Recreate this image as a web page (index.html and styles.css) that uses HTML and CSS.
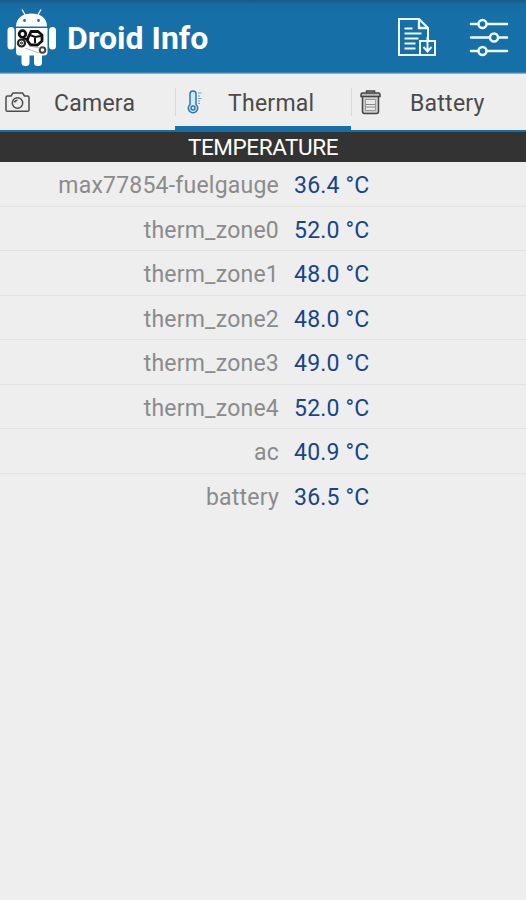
FILE: index.html
```html
<!DOCTYPE html>
<html lang="en">
<head>
<meta charset="utf-8">
<title>Droid Info</title>
<link rel="stylesheet" href="styles.css">
</head>
<body>
<header class="bar">
  <svg class="logo" width="50" height="60" viewBox="0 0 50 60">
    <g fill="#fff">
      <path d="M9 17.500C9 8 17 4.500 24.500 4.500S40 8 40 17.500z"/>
      <path d="M9 19h31.500V43q0 3.500-3.500 3.500H12.500Q9 46.500 9 43z"/>
      <rect x="0.500" y="18" width="7" height="22.500" rx="3.500"/>
      <rect x="42" y="18" width="7" height="22.500" rx="3.500"/>
      <rect x="14.500" y="42" width="8" height="15" rx="3.500"/>
      <rect x="27" y="42" width="8" height="15" rx="3.500"/>
    </g>
    <path d="M15 .5l3.500 6M34 .5L30.500 6.500" stroke="#fff" stroke-width="1.300"/>
    <circle cx="17.500" cy="11.500" r="1.400" fill="#176fa8"/><circle cx="31.500" cy="11.500" r="1.400" fill="#176fa8"/>
    <g fill="none" stroke="#111">
      <circle cx="15.500" cy="25" r="3.300" stroke-width="2.800"/>
      <path d="M24 22.500h7l4 3.500v6l-4.500 4h-7L20 31z" stroke-width="2.800" stroke-linejoin="round"/>
      <path d="M23 26l5 2 6-1M28 28v6M16 29.500l6 1" stroke-width="2"/>
      <circle cx="14.500" cy="34" r="3.500" stroke-width="2.200" stroke="#222"/><circle cx="14.500" cy="34" r="1" stroke-width="1"/>
      <circle cx="35.500" cy="41" r="2.800" stroke="#444" stroke-width="2"/>
      <path d="M18 39l14 5M22 37l11 2" stroke="#aaa" stroke-width=".8"/>
    </g>
  </svg>
  <h1 class="title">Droid Info</h1>
  <svg class="report" width="40" height="42" viewBox="0 0 40 42" fill="none" stroke="#eefaff" stroke-width="2">
    <path d="M22 38H2V2h20l9 9v13"/><path d="M22 2v9h9" stroke-width="2.300"/>
    <path d="M7.500 11.500h8M7.500 16.500h17M7.500 21.500h14M7.500 26.500h11M7.500 31.500h11"/>
    <path d="M27 24h-4v14h15V24H27M30.500 20v14M26.500 30l4 4.500 4-4.500"/>
  </svg>
  <svg class="sliders" width="40" height="40" viewBox="0 0 40 40" fill="none" stroke="#eefaff" stroke-width="2.500" stroke-linecap="round">
    <path d="M2 6h7M18 6h20M2 19.500h18M30 19.500h8M2 33h7M18 33h20"/>
    <circle cx="13.500" cy="6" r="4"/><circle cx="25" cy="19.500" r="4"/><circle cx="13.500" cy="33" r="4"/>
  </svg>
</header>
<nav class="tabs">
  <a class="tab camera">
    <svg class="icon" width="26" height="24" viewBox="0 0 26 24" fill="none" stroke="#4c4c4c" stroke-width="1.500">
      <path d="M1 6.500q0-1.500 1.500-1.500H6l2-3h9.500l2 3h3Q24 5 24 6.500V19q0 1.300-1.300 1.300H2.300Q1 20.300 1 19z"/>
      <circle cx="12.500" cy="12" r="5.200"/><path d="M9.500 11.500q.5-2.200 3-2.200"/>
    </svg><span class="label">Camera</span>
  </a>
  <a class="tab thermal selected">
    <svg class="icon" width="18" height="26" viewBox="0 0 18 26" fill="none" stroke="#2a78ae" stroke-width="1.500">
      <path d="M4 14.500V4a3 3 0 0 1 6 0v10.500a4.700 4.700 0 1 1-6 0z" fill="#d9e7f1"/>
      <circle cx="7" cy="18" r="2"/>
      <path d="M12 3h3.500M12 6h2M12 8.500h3.500M12 11h2M12 13.500h2" stroke="#6c9fc2" stroke-width="1"/>
    </svg><span class="label">Thermal</span>
  </a>
  <a class="tab battery">
    <svg class="icon" width="22" height="26" viewBox="0 0 22 26" fill="none" stroke="#444" stroke-width="1.500">
      <path d="M2.500 6v15.500q0 2 2 2h12q2 0 2-2V6" fill="#ccc"/>
      <path d="M6.500 3V1h8v2M1 6.500V4.500Q1 3 2.500 3h16Q20 3 20 4.500v2z" fill="#bbb"/>
      <path d="M5.500 9.500h10v11h-10z" stroke="#999" fill="#e8e8e8" stroke-width="1"/><path d="M6 14.500h9M6 17h9" stroke="#888" stroke-width="1"/>
    </svg><span class="label">Battery</span>
  </a>
</nav>
<main>
  <h2 class="section">TEMPERATURE</h2>
  <dl class="list">
    <div class="row"><dt>max77854-fuelgauge</dt><dd>36.4 °C</dd></div>
    <div class="row"><dt>therm_zone0</dt><dd>52.0 °C</dd></div>
    <div class="row"><dt>therm_zone1</dt><dd>48.0 °C</dd></div>
    <div class="row"><dt>therm_zone2</dt><dd>48.0 °C</dd></div>
    <div class="row"><dt>therm_zone3</dt><dd>49.0 °C</dd></div>
    <div class="row"><dt>therm_zone4</dt><dd>52.0 °C</dd></div>
    <div class="row"><dt>ac</dt><dd>40.9 °C</dd></div>
    <div class="row"><dt>battery</dt><dd>36.5 °C</dd></div>
  </dl>
</main>
</body>
</html>
```
FILE: styles.css
```css
* { box-sizing: border-box; }
body {
  margin: 0;
  min-height: 900px;
  background: #eee;
  font-family: Roboto, "Liberation Sans", sans-serif;
}
.bar {
  display: flex;
  align-items: flex-start;
  height: 74px;
  background: linear-gradient(#165b8a 0, #176b9f 4px, #176fa8 12px, #176fa8 72px, #5b9cc4 73px, #a4c7dc 74px);
}
.logo { margin: 9px 0 0 7px; }
.title {
  margin: 18px 0 0 10px;
  width: 330px;
  font-size: 32px;
  line-height: 40px;
  font-weight: 700;
  letter-spacing: 0;
  color: #fff;
  white-space: nowrap;
}
.report { flex: none; margin: 17px 0 0; }
.sliders { flex: none; margin: 18px 0 0 32px; }
.tabs {
  display: grid;
  grid-template-columns: 175px 176px 175px;
  height: 58px;
  border-bottom: 2px solid #176fa8;
}
.tab {
  position: relative;
  display: flex;
  align-items: center;
  height: 56px;
  padding-top: 2px;
  font-size: 23px;
  color: #4a4a4a;
}
.tab + .tab::before {
  content: "";
  position: absolute;
  left: 0;
  top: 14px;
  width: 1px;
  height: 28px;
  background: #d8d8d8;
}
.selected { border-bottom: 5px solid #176fa8; height: 57px; padding-top: 6px; }
.camera { padding-left: 5px; }
.thermal { padding-left: 11px; }
.battery { padding-left: 9px; }
.label { letter-spacing: 0.25px; white-space: nowrap; }
.camera .label { margin-left: 23px; }
.thermal .label { margin-left: 24px; }
.battery .label { margin-left: 28px; }
.section {
  margin: 0;
  height: 30px;
  line-height: 31px;
  background: #333;
  color: #fff;
  font-size: 22.5px;
  font-weight: 400;
  letter-spacing: -0.4px;
  text-align: center;
}
.list { margin: 0; }
.row {
  display: grid;
  grid-template-columns: 279px 1fr;
  column-gap: 15px;
  height: 44.5px;
  line-height: 47px;
  font-size: 23px;
  border-bottom: 1px solid #e1e1e1;
}
.row:last-child { border-bottom: 0; }
dt { text-align: right; color: #8b8b8b; letter-spacing: 0.22px; }
dd { margin: 0; color: #17458a; letter-spacing: 0.2px; }
```
